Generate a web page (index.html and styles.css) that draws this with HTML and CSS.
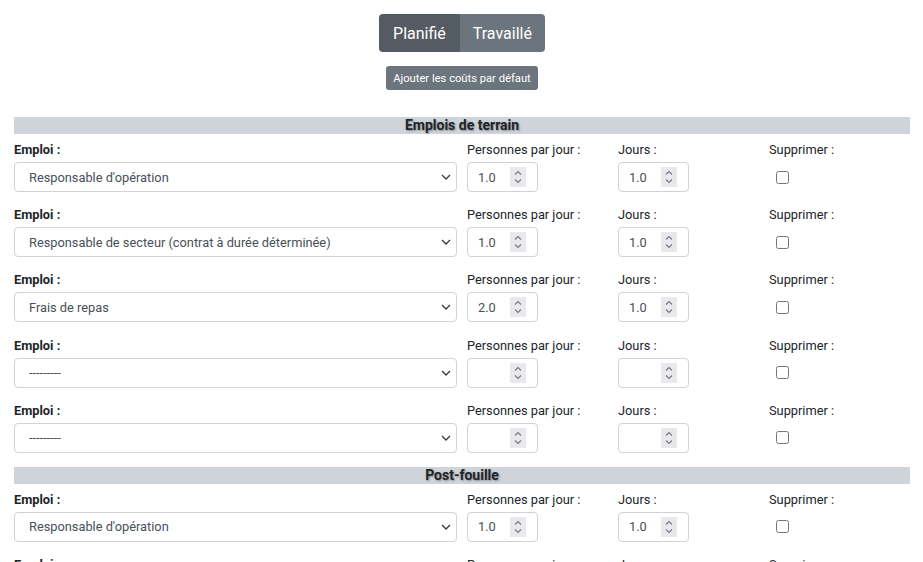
FILE: index.html
```html
<!DOCTYPE html>
<html lang="fr">
<head>
<meta charset="utf-8">
<link rel="stylesheet" href="styles.css">
</head>
<body>
<div class="page">
  <div class="top">
    <div class="btn-group">
      <button class="seg active">Planifié</button>
      <button class="seg">Travaillé</button>
    </div>
    <button class="btn-small">Ajouter les coûts par défaut</button>
  </div>

  <div class="section-title">Emplois de terrain</div>

  <div class="row">
    <div class="field">
      <label class="lbl bold">Emploi :</label>
      <div class="select-wrap">
        <select class="select"><option>Responsable d'opération</option></select>
        <svg class="chev" width="10" height="6" viewBox="0 0 10 6"><path d="M1 1l4 4 4-4" fill="none" stroke="#343a40" stroke-width="1.3"/></svg>
      </div>
    </div>
    <div class="field"><label class="lbl">Personnes par jour :</label><div class="num-wrap"><input class="num" type="number" value="1.0"><svg class="spin" width="16" height="20" viewBox="0 0 16 20"><rect width="16" height="20" fill="#e9e9ed"/><path d="M5 7.5l3-3 3 3M5 12.5l3 3 3-3" fill="none" stroke="#76767c" stroke-width="1.1"/></svg></div></div>
    <div class="field"><label class="lbl">Jours :</label><div class="num-wrap"><input class="num" type="number" value="1.0"><svg class="spin" width="16" height="20" viewBox="0 0 16 20"><rect width="16" height="20" fill="#e9e9ed"/><path d="M5 7.5l3-3 3 3M5 12.5l3 3 3-3" fill="none" stroke="#76767c" stroke-width="1.1"/></svg></div></div>
    <div class="field"><label class="lbl">Supprimer :</label><div class="chk-wrap"><input class="chk" type="checkbox"></div></div>
  </div>

  <div class="row">
    <div class="field">
      <label class="lbl bold">Emploi :</label>
      <div class="select-wrap">
        <select class="select"><option>Responsable de secteur (contrat à durée déterminée)</option></select>
        <svg class="chev" width="10" height="6" viewBox="0 0 10 6"><path d="M1 1l4 4 4-4" fill="none" stroke="#343a40" stroke-width="1.3"/></svg>
      </div>
    </div>
    <div class="field"><label class="lbl">Personnes par jour :</label><div class="num-wrap"><input class="num" type="number" value="1.0"><svg class="spin" width="16" height="20" viewBox="0 0 16 20"><rect width="16" height="20" fill="#e9e9ed"/><path d="M5 7.5l3-3 3 3M5 12.5l3 3 3-3" fill="none" stroke="#76767c" stroke-width="1.1"/></svg></div></div>
    <div class="field"><label class="lbl">Jours :</label><div class="num-wrap"><input class="num" type="number" value="1.0"><svg class="spin" width="16" height="20" viewBox="0 0 16 20"><rect width="16" height="20" fill="#e9e9ed"/><path d="M5 7.5l3-3 3 3M5 12.5l3 3 3-3" fill="none" stroke="#76767c" stroke-width="1.1"/></svg></div></div>
    <div class="field"><label class="lbl">Supprimer :</label><div class="chk-wrap"><input class="chk" type="checkbox"></div></div>
  </div>

  <div class="row">
    <div class="field">
      <label class="lbl bold">Emploi :</label>
      <div class="select-wrap">
        <select class="select"><option>Frais de repas</option></select>
        <svg class="chev" width="10" height="6" viewBox="0 0 10 6"><path d="M1 1l4 4 4-4" fill="none" stroke="#343a40" stroke-width="1.3"/></svg>
      </div>
    </div>
    <div class="field"><label class="lbl">Personnes par jour :</label><div class="num-wrap"><input class="num" type="number" value="2.0"><svg class="spin" width="16" height="20" viewBox="0 0 16 20"><rect width="16" height="20" fill="#e9e9ed"/><path d="M5 7.5l3-3 3 3M5 12.5l3 3 3-3" fill="none" stroke="#76767c" stroke-width="1.1"/></svg></div></div>
    <div class="field"><label class="lbl">Jours :</label><div class="num-wrap"><input class="num" type="number" value="1.0"><svg class="spin" width="16" height="20" viewBox="0 0 16 20"><rect width="16" height="20" fill="#e9e9ed"/><path d="M5 7.5l3-3 3 3M5 12.5l3 3 3-3" fill="none" stroke="#76767c" stroke-width="1.1"/></svg></div></div>
    <div class="field"><label class="lbl">Supprimer :</label><div class="chk-wrap"><input class="chk" type="checkbox"></div></div>
  </div>

  <div class="row">
    <div class="field">
      <label class="lbl bold">Emploi :</label>
      <div class="select-wrap">
        <select class="select"><option>---------</option></select>
        <svg class="chev" width="10" height="6" viewBox="0 0 10 6"><path d="M1 1l4 4 4-4" fill="none" stroke="#343a40" stroke-width="1.3"/></svg>
      </div>
    </div>
    <div class="field"><label class="lbl">Personnes par jour :</label><div class="num-wrap"><input class="num" type="number"><svg class="spin" width="16" height="20" viewBox="0 0 16 20"><rect width="16" height="20" fill="#e9e9ed"/><path d="M5 7.5l3-3 3 3M5 12.5l3 3 3-3" fill="none" stroke="#76767c" stroke-width="1.1"/></svg></div></div>
    <div class="field"><label class="lbl">Jours :</label><div class="num-wrap"><input class="num" type="number"><svg class="spin" width="16" height="20" viewBox="0 0 16 20"><rect width="16" height="20" fill="#e9e9ed"/><path d="M5 7.5l3-3 3 3M5 12.5l3 3 3-3" fill="none" stroke="#76767c" stroke-width="1.1"/></svg></div></div>
    <div class="field"><label class="lbl">Supprimer :</label><div class="chk-wrap"><input class="chk" type="checkbox"></div></div>
  </div>

  <div class="row">
    <div class="field">
      <label class="lbl bold">Emploi :</label>
      <div class="select-wrap">
        <select class="select"><option>---------</option></select>
        <svg class="chev" width="10" height="6" viewBox="0 0 10 6"><path d="M1 1l4 4 4-4" fill="none" stroke="#343a40" stroke-width="1.3"/></svg>
      </div>
    </div>
    <div class="field"><label class="lbl">Personnes par jour :</label><div class="num-wrap"><input class="num" type="number"><svg class="spin" width="16" height="20" viewBox="0 0 16 20"><rect width="16" height="20" fill="#e9e9ed"/><path d="M5 7.5l3-3 3 3M5 12.5l3 3 3-3" fill="none" stroke="#76767c" stroke-width="1.1"/></svg></div></div>
    <div class="field"><label class="lbl">Jours :</label><div class="num-wrap"><input class="num" type="number"><svg class="spin" width="16" height="20" viewBox="0 0 16 20"><rect width="16" height="20" fill="#e9e9ed"/><path d="M5 7.5l3-3 3 3M5 12.5l3 3 3-3" fill="none" stroke="#76767c" stroke-width="1.1"/></svg></div></div>
    <div class="field"><label class="lbl">Supprimer :</label><div class="chk-wrap"><input class="chk" type="checkbox"></div></div>
  </div>

  <div class="section-title">Post-fouille</div>

  <div class="row">
    <div class="field">
      <label class="lbl bold">Emploi :</label>
      <div class="select-wrap">
        <select class="select"><option>Responsable d'opération</option></select>
        <svg class="chev" width="10" height="6" viewBox="0 0 10 6"><path d="M1 1l4 4 4-4" fill="none" stroke="#343a40" stroke-width="1.3"/></svg>
      </div>
    </div>
    <div class="field"><label class="lbl">Personnes par jour :</label><div class="num-wrap"><input class="num" type="number" value="1.0"><svg class="spin" width="16" height="20" viewBox="0 0 16 20"><rect width="16" height="20" fill="#e9e9ed"/><path d="M5 7.5l3-3 3 3M5 12.5l3 3 3-3" fill="none" stroke="#76767c" stroke-width="1.1"/></svg></div></div>
    <div class="field"><label class="lbl">Jours :</label><div class="num-wrap"><input class="num" type="number" value="1.0"><svg class="spin" width="16" height="20" viewBox="0 0 16 20"><rect width="16" height="20" fill="#e9e9ed"/><path d="M5 7.5l3-3 3 3M5 12.5l3 3 3-3" fill="none" stroke="#76767c" stroke-width="1.1"/></svg></div></div>
    <div class="field"><label class="lbl">Supprimer :</label><div class="chk-wrap"><input class="chk" type="checkbox"></div></div>
  </div>

  <div class="row">
    <div class="field">
      <label class="lbl bold">Emploi :</label>
      <div class="select-wrap">
        <select class="select"><option>---------</option></select>
        <svg class="chev" width="10" height="6" viewBox="0 0 10 6"><path d="M1 1l4 4 4-4" fill="none" stroke="#343a40" stroke-width="1.3"/></svg>
      </div>
    </div>
    <div class="field"><label class="lbl">Personnes par jour :</label><div class="num-wrap"><input class="num" type="number"><svg class="spin" width="16" height="20" viewBox="0 0 16 20"><rect width="16" height="20" fill="#e9e9ed"/><path d="M5 7.5l3-3 3 3M5 12.5l3 3 3-3" fill="none" stroke="#76767c" stroke-width="1.1"/></svg></div></div>
    <div class="field"><label class="lbl">Jours :</label><div class="num-wrap"><input class="num" type="number"><svg class="spin" width="16" height="20" viewBox="0 0 16 20"><rect width="16" height="20" fill="#e9e9ed"/><path d="M5 7.5l3-3 3 3M5 12.5l3 3 3-3" fill="none" stroke="#76767c" stroke-width="1.1"/></svg></div></div>
    <div class="field"><label class="lbl">Supprimer :</label><div class="chk-wrap"><input class="chk" type="checkbox"></div></div>
  </div>
</div>
</body>
</html>
```

FILE: styles.css
```css
html, body {
  margin: 0;
  padding: 0;
  background: #fff;
  overflow: hidden;
}
body {
  font-family: Roboto, "Liberation Sans", Arial, sans-serif;
  color: #212529;
}
.page {
  width: 896px;
  margin-left: 14px;
  padding-top: 14px;
}
.top {
  display: flex;
  flex-direction: column;
  align-items: center;
  gap: 14px;
  margin-bottom: 27px;
}
.btn-group {
  display: flex;
}
.seg {
  font-family: inherit;
  font-size: 16px;
  height: 38px;
  padding: 0 13px;
  border: 0;
  color: #fff;
  background: #6c757d;
  margin: 0;
  cursor: pointer;
}
.seg:first-child {
  border-radius: 4px 0 0 4px;
  padding: 0 14px;
}
.seg:last-child {
  border-radius: 0 4px 4px 0;
}
.seg.active {
  background: #545b62;
}
.btn-small {
  font-family: inherit;
  font-size: 11.2px;
  height: 24px;
  padding: 0 7px;
  border: 0;
  border-radius: 3px;
  color: #fff;
  background: #6c757d;
}
.section-title {
  height: 17px;
  line-height: 17px;
  background: #ced4da;
  text-align: center;
  font-size: 14px;
  font-weight: 700;
  color: #212529;
  text-shadow: 1px 1px 2px rgba(0,0,0,0.35);
  margin-bottom: 7px;
}
.row {
  display: grid;
  grid-template-columns: 443px 141px 141px 1fr;
  column-gap: 10px;
  margin-bottom: 14.2px;
}
.field {
  display: flex;
  flex-direction: column;
}
.lbl {
  font-size: 12.8px;
  line-height: 18px;
  height: 18px;
  margin-bottom: 3px;
  color: #212529;
}
.lbl.bold {
  font-weight: 700;
}
.select-wrap {
  position: relative;
  height: 30px;
}
.select {
  -webkit-appearance: none;
  appearance: none;
  width: 100%;
  height: 30px;
  box-sizing: border-box;
  border: 1px solid #ced4da;
  border-radius: 4px;
  background: #fff;
  font-family: inherit;
  font-size: 12.8px;
  color: #495057;
  padding: 0 30px 0 14px;
  margin: 0;
}
.chev {
  position: absolute;
  right: 6px;
  top: 12px;
  pointer-events: none;
}
.num-wrap {
  position: relative;
  width: 71px;
  height: 30px;
}
.num {
  width: 71px;
  height: 30px;
  box-sizing: border-box;
  border: 1px solid #ced4da;
  border-radius: 4px;
  font-family: inherit;
  font-size: 12.8px;
  color: #495057;
  padding: 0 28px 0 10px;
  margin: 0;
  background: #fff;
  -moz-appearance: textfield;
}
.num::-webkit-inner-spin-button,
.num::-webkit-outer-spin-button {
  -webkit-appearance: none;
  margin: 0;
}
.spin {
  position: absolute;
  right: 12px;
  top: 5px;
  pointer-events: none;
}
.chk-wrap {
  height: 30px;
  display: flex;
  align-items: center;
}
.chk {
  width: 13px;
  height: 13px;
  margin: 0 0 0 7px;
}
```
